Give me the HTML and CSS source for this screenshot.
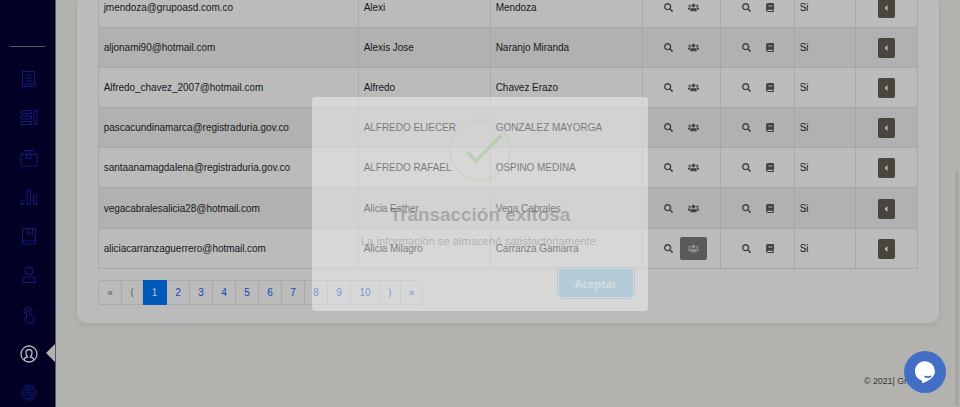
FILE: index.html
```html
<!DOCTYPE html>
<html lang="es">
<head>
<meta charset="utf-8">
<title>Usuarios</title>
<link rel="stylesheet" href="styles.css">
</head>
<body>
<svg width="0" height="0" class="defs">
  <symbol id="search" viewBox="0 0 512 512"><path d="M505 442.700 405.300 343c-4.500-4.500-10.600-7-17-7H372c27.600-35.300 44-79.700 44-128C416 93.100 322.900 0 208 0S0 93.100 0 208s93.100 208 208 208c48.300 0 92.700-16.400 128-44v16.300c0 6.400 2.500 12.500 7 17l99.700 99.700c9.400 9.400 24.600 9.400 33.900 0l28.300-28.300c9.400-9.400 9.400-24.600.1-34zM208 336c-70.700 0-128-57.200-128-128 0-70.700 57.200-128 128-128 70.700 0 128 57.200 128 128 0 70.700-57.200 128-128 128z"/></symbol>
  <symbol id="users" viewBox="0 0 640 512"><path d="M96 224c35.300 0 64-28.700 64-64s-28.700-64-64-64-64 28.700-64 64 28.700 64 64 64zm448 0c35.300 0 64-28.700 64-64s-28.700-64-64-64-64 28.700-64 64 28.700 64 64 64zm32 32h-64c-17.600 0-33.500 7.100-45.100 18.600 40.300 22.100 68.900 62 75.100 109.400h66c17.700 0 32-14.300 32-32v-32c0-35.300-28.700-64-64-64zm-256 0c61.900 0 112-50.100 112-112S381.900 32 320 32 208 82.100 208 144s50.100 112 112 112zm76.800 32h-8.300c-20.800 10-43.900 16-68.500 16s-47.600-6-68.500-16h-8.300C179.600 288 128 339.600 128 403.200V432c0 26.500 21.500 48 48 48h288c26.500 0 48-21.500 48-48v-28.800c0-63.600-51.600-115.200-115.200-115.200zm-223.700-13.400C161.500 263.100 145.600 256 128 256H64c-35.300 0-64 28.700-64 64v32c0 17.700 14.300 32 32 32h65.900c6.300-47.400 34.900-87.300 75.200-109.400z"/></symbol>
  <symbol id="book" viewBox="0 0 448 512"><path d="M448 360V24c0-13.300-10.700-24-24-24H96C43 0 0 43 0 96v320c0 53 43 96 96 96h328c13.300 0 24-10.700 24-24v-16c0-7.500-3.500-14.300-8.900-18.700-4.200-15.400-4.200-59.300 0-74.700 5.400-4.300 8.900-11.100 8.900-18.600zM128 134c0-3.300 2.700-6 6-6h212c3.300 0 6 2.700 6 6v20c0 3.300-2.700 6-6 6H134c-3.300 0-6-2.700-6-6v-20zm0 64c0-3.300 2.700-6 6-6h212c3.300 0 6 2.700 6 6v20c0 3.300-2.700 6-6 6H134c-3.300 0-6-2.700-6-6v-20zm253.400 250H96c-17.700 0-32-14.300-32-32 0-17.600 14.400-32 32-32h285.400c-1.900 17.100-1.900 46.900 0 64z"/></symbol>
  <symbol id="caret" viewBox="0 0 4 8"><path d="M3.500 1v6L.5 4z"/></symbol>
</svg>

<div class="app">
  <nav class="sidebar">
    <div class="divider"></div>
    <a class="item"><svg viewBox="0 0 18 18"><path d="M2.500 17V1.500H14.500V14M2.500 16.500H14.500C17 16.500 17 14 16 14H6.500C5 14 6 16.500 3.500 16.500M5 5H12M5 8H12M5 11H12"/></svg></a>
    <a class="item"><svg viewBox="0 0 18 18"><path d="M1 1.500H11.500V4.500H1zM1 7H11.500V10H1zM1 12.500H11.500V15.500H1zM14 1.500H17V15.500H14z"/></svg></a>
    <a class="item"><svg viewBox="0 0 18 18"><path d="M1 5.500H17V15.500Q17 17 15.500 17H2.500Q1 17 1 15.500zL4.500 1.500H13.500L17 5.500M6.500 5.500V9.500H11V5.500L10 1.500M6.500 5.500L8 1.500"/></svg></a>
    <a class="item"><svg viewBox="0 0 18 18"><path d="M1 12H4V16.500H1zM7.200 2H10.500V16.500H7.200zM13.500 7H16.700V16.500H13.500z"/></svg></a>
    <a class="item"><svg viewBox="0 0 18 18"><path d="M4 1.500H15.500V17H4Q2.500 17 2.500 15.500V3Q2.500 1.500 4 1.500M2.500 14H15.500M8.500 1.500V7.500L10.500 6L12.500 7.500V1.500"/></svg></a>
    <a class="item"><svg viewBox="0 0 18 18"><circle cx="9" cy="5" r="4"/><path d="M5.500 10.500Q9 12.500 12.500 10.500Q16 11.500 15.500 16.500H2.500Q2 11.500 5.500 10.500z"/></svg></a>
    <a class="item"><svg viewBox="0 0 18 18"><path d="M5 8A4 4 0 1 1 11.500 7.500M6.500 12V5Q8 3 9.500 5V9L13.500 10Q14.500 10.500 14 13L13.500 17H7L4 12.500Q3.500 10.500 6.500 12"/></svg></a>
    <a class="item active"><svg viewBox="0 0 18 18"><circle cx="9" cy="9" r="8"/><path d="M4 15Q4.500 12.500 7.500 12Q5.500 9.500 6 7Q6.500 4.500 9 4.500T12 7Q12.500 9.500 10.500 12Q13.500 12.500 14 15"/></svg></a>
    <a class="item"><svg viewBox="0 0 18 18"><path d="M4 3Q9-1 14 3M1.500 8Q2.500 3.500 9 3Q15.500 3.500 16.500 8M2 12Q2.500 5.500 9 5.500T16 12M4 14.500Q3 8 9 8T14 14.500M6 16Q5.500 10.500 9 10.500T12 16M8 17Q8 13 9 13T10 17"/></svg></a>
  </nav>

  <main class="main">
    <section class="card">
      <div class="table">
        <div class="row"><div>jmendoza@grupoasd.com.co</div><div>Alexi</div><div>Mendoza</div><div class="acts"><i><svg><use href="#search"/></svg></i><b><svg><use href="#users"/></svg></b></div><div class="acts"><i><svg><use href="#search"/></svg></i><em><svg><use href="#book"/></svg></em></div><div>Si</div><div class="end"><button><svg><use href="#caret"/></svg></button></div></div>
        <div class="row odd"><div>aljonami90@hotmail.com</div><div>Alexis Jose</div><div>Naranjo Miranda</div><div class="acts"><i><svg><use href="#search"/></svg></i><b><svg><use href="#users"/></svg></b></div><div class="acts"><i><svg><use href="#search"/></svg></i><em><svg><use href="#book"/></svg></em></div><div>Si</div><div class="end"><button><svg><use href="#caret"/></svg></button></div></div>
        <div class="row"><div>Alfredo_chavez_2007@hotmail.com</div><div>Alfredo</div><div>Chavez Erazo</div><div class="acts"><i><svg><use href="#search"/></svg></i><b><svg><use href="#users"/></svg></b></div><div class="acts"><i><svg><use href="#search"/></svg></i><em><svg><use href="#book"/></svg></em></div><div>Si</div><div class="end"><button><svg><use href="#caret"/></svg></button></div></div>
        <div class="row odd"><div>pascacundinamarca@registraduria.gov.co</div><div>ALFREDO ELIECER</div><div>GONZALEZ MAYORGA</div><div class="acts"><i><svg><use href="#search"/></svg></i><b><svg><use href="#users"/></svg></b></div><div class="acts"><i><svg><use href="#search"/></svg></i><em><svg><use href="#book"/></svg></em></div><div>Si</div><div class="end"><button><svg><use href="#caret"/></svg></button></div></div>
        <div class="row"><div>santaanamagdalena@registraduria.gov.co</div><div>ALFREDO RAFAEL</div><div>OSPINO MEDINA</div><div class="acts"><i><svg><use href="#search"/></svg></i><b><svg><use href="#users"/></svg></b></div><div class="acts"><i><svg><use href="#search"/></svg></i><em><svg><use href="#book"/></svg></em></div><div>Si</div><div class="end"><button><svg><use href="#caret"/></svg></button></div></div>
        <div class="row odd"><div>vegacabralesalicia28@hotmail.com</div><div>Alicia Esther</div><div>Vega Cabrales</div><div class="acts"><i><svg><use href="#search"/></svg></i><b><svg><use href="#users"/></svg></b></div><div class="acts"><i><svg><use href="#search"/></svg></i><em><svg><use href="#book"/></svg></em></div><div>Si</div><div class="end"><button><svg><use href="#caret"/></svg></button></div></div>
        <div class="row"><div>aliciacarranzaguerrero@hotmail.com</div><div>Alicia Milagro</div><div>Carranza Gamarra</div><div class="acts"><i><svg><use href="#search"/></svg></i><b class="pressed"><svg><use href="#users"/></svg></b></div><div class="acts"><i><svg><use href="#search"/></svg></i><em><svg><use href="#book"/></svg></em></div><div>Si</div><div class="end"><button><svg><use href="#caret"/></svg></button></div></div>
      </div>
      <div class="pager"><span class="off">«</span><span class="off narrow">⟨</span><span class="current">1</span><span>2</span><span>3</span><span>4</span><span>5</span><span>6</span><span>7</span><span>8</span><span>9</span><span class="wide">10</span><span class="narrow">⟩</span><span class="last">»</span></div>
    </section>
    <footer>© 2021| Grupo</footer>
  </main>
</div>

<div class="scrollbar"></div>
<div class="modal">
  <svg class="check" viewBox="0 0 62 62"><circle cx="31" cy="31" r="30"/><path d="M19 34L27 42L51.500 17.500"/></svg>
  <h2>Transacción exitosa</h2>
  <p>La información se almacenó satisfactoriamente.</p>
  <button class="accept">Aceptar</button>
</div>
<div class="chat"><svg viewBox="0 0 42 42"><path fill="#fff" d="M21 10.200a10 10 0 0 1 10 10c0 5-5 9.500-13 12v-2.400A10 10 0 0 1 21 10.200z"/><path d="M20.500 25.200Q24 27 27 25.200" fill="none" stroke="#426fc5" stroke-width="1.800"/></svg></div>
</body>
</html>
```

FILE: styles.css
```css
* { box-sizing: border-box; }
body {
  margin: 0;
  height: 407px;
  overflow: hidden;
  background: #b3b2ae;
  font: 10px/16px "Liberation Sans", Arial, sans-serif;
  color: #17191b;
}
.defs { position: absolute; }
svg { display: block; }
.app { display: flex; height: 407px; }

.sidebar {
  width: 56px;
  flex: none;
  background: #020024;
  border-right: 1px solid #56566a;
  overflow: hidden;
  padding-top: 46px;
}
.divider { height: 1px; width: 35px; margin: 0 0 12.500px 10px; background: #5b5a66; }
.item {
  display: flex;
  align-items: center;
  justify-content: flex-end;
  height: 39.250px;
  padding-right: 17.500px;
  position: relative;
}
.item svg { width: 18px; height: 18px; fill: none; stroke: #141d79; stroke-width: 1; }
.item.active svg { stroke: #b9b9bd; stroke-width: 1.300; }
.item.active::after {
  content: "";
  position: absolute;
  right: -1px;
  top: 9px;
  border: 10.500px solid transparent;
  border-left-width: 0;
  border-right-color: #b3b2ae;
}

.main { flex: 1; }
.card {
  width: 862px;
  height: 323px;
  margin-left: 21px;
  padding-left: 21px;
  background: #bbb;
  border-radius: 0 0 10px 10px;
  box-shadow: 0 2px 5px rgba(0, 0, 0, .09);
}
.table {
  width: 820px;
  margin-top: -12.500px;
  border-left: 1px solid #a6a8aa;
  float: left;
}
.row {
  display: grid;
  grid-template-columns: 260px 132px 152px 78px 74px 61px 62px;
  height: 40.200px;
  letter-spacing: -.040px;
}
.row.odd { background: #b1b1b1; }
.row > div {
  border-right: 1px solid #a6a8aa;
  border-bottom: 1px solid #a6a8aa;
  padding: 1px 0 0 4.700px;
  display: flex;
  align-items: center;
  white-space: nowrap;
}
.row svg { fill: #45423e; }
.row .acts { padding: 0 0 0 21px; }
.acts i { width: 9px; margin-right: 7px; }
.acts i svg { width: 9px; height: 9px; }
.acts b {
  width: 27px;
  height: 23px;
  border-radius: 2px;
  display: flex;
  align-items: center;
  justify-content: center;
}
.acts b svg { width: 11px; height: 9px; }
.acts b.pressed { background: #5c5a58; }
.acts .pressed svg { fill: #92908e; }
.acts em { width: 8px; margin-left: 8px; }
.acts em svg { width: 8px; height: 9px; }
.row .end { padding-left: 22px; }
.end button {
  width: 17px;
  height: 20px;
  padding: 0;
  border: 0;
  border-radius: 2px;
  background: #48443e;
  display: flex;
  align-items: center;
  justify-content: center;
}
.end button svg { width: 4px; height: 8px; fill: #bbb; margin-right: 2px; }

.pager {
  clear: both;
  display: flex;
  width: 325px;
  height: 25px;
  position: relative;
  top: 11px;
  border: 1px solid #a8aaac;
  border-radius: 3px;
}
.pager span {
  flex: none;
  width: 23px;
  line-height: 24px;
  text-align: center;
  border-right: 1px solid #a8aaac;
  color: #0649bd;
}
.pager .off { color: #4f5357; }
.pager .narrow { width: 21px; }
.pager .wide { width: 29px; }
.pager .last { width: 21px; border-right: 0; }
.pager .current { width: 24px; margin: -1px 0; line-height: 26px; background: #005abb; border-color: #005abb; color: #b8c4d2; }

footer { margin: 51px 0 0 808px; font-size: 8.800px; line-height: 15px; color: #353535; white-space: nowrap; }
.scrollbar { position: absolute; left: 955px; top: 171px; width: 4px; height: 235px; border-radius: 2px; background: #a6a6a5; }

.modal {
  position: absolute;
  left: 312px;
  top: 97px;
  width: 336px;
  height: 214px;
  border-radius: 4px;
  background: rgba(255, 255, 255, .42);
  display: flex;
  flex-direction: column;
  align-items: center;
}
.check { width: 62px; height: 62px; margin-top: 22px; fill: none; flex: none; }
.check circle { stroke: rgba(190, 205, 165, .3); stroke-width: 2; }
.check path { stroke: rgba(165, 200, 145, .55); stroke-width: 3.600; stroke-linecap: round; stroke-linejoin: miter; }
.modal h2 { margin: 21px 0 0; font-size: 18.900px; line-height: 26px; color: rgba(89, 89, 89, .36); white-space: nowrap; }
.modal p { margin: 4px 0 0; font-size: 11.250px; line-height: 18px; color: rgba(90, 90, 90, .32); white-space: nowrap; }
.accept {
  align-self: flex-end;
  margin: 19px 15px 0 0;
  width: 74px;
  height: 28px;
  flex: none;
  border: 0;
  border-radius: 3px;
  background: #b2cbd6;
  box-shadow: 0 0 0 1px #d3dadd, 0 0 0 2px #bcc8ce;
  color: #d6dde0;
  font: bold 10.800px "Open Sans", sans-serif;
}
.chat { position: absolute; left: 904px; top: 351px; width: 42px; height: 42px; border-radius: 50%; background: #426fc5; }
```
